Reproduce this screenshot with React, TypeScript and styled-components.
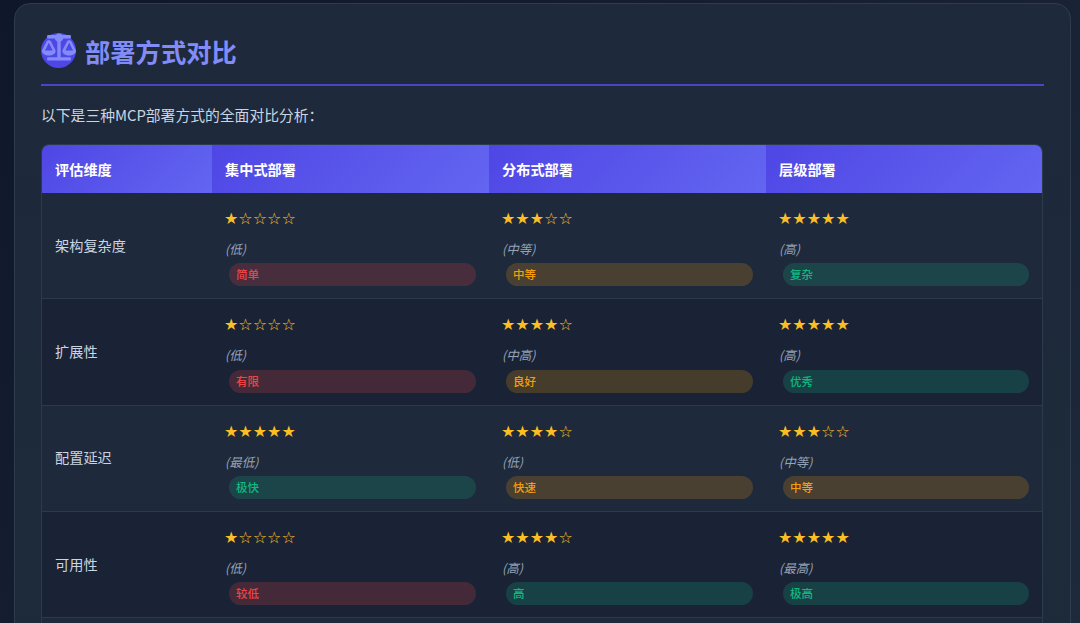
import React from "react";
import styled, { createGlobalStyle } from "styled-components";
import { FaBalanceScale } from "react-icons/fa";

const Global = createGlobalStyle`
  html, body { margin: 0; padding: 0; height: 623px; overflow: hidden; }
  body {
    background: linear-gradient(135deg, #0f172a 0%, #1e293b 100%);
    font-family: "Noto Sans CJK SC", "Liberation Sans", sans-serif;
  }
`;

const Page = styled.div`
  height: 623px;
  overflow: hidden;
  padding: 3px 9px 0 14px;
  box-sizing: border-box;
`;

const Card = styled.section`
  background: linear-gradient(180deg, #1e293b 0%, #1c2b39 100%);
  border: 1px solid #2f3c50;
  border-radius: 16px;
  padding: 29px 26px 26px;
`;

const Heading = styled.h2`
  display: flex;
  align-items: center;
  gap: 9px;
  margin: 0 0 17px;
  padding-bottom: 15px;
  border-bottom: 2px solid #4a45c8;
  color: #818cf8;
  font-size: 25.3px;
  line-height: 36px;
  font-weight: 700;
`;

const IconCircle = styled.span`
  width: 35px;
  height: 35px;
  margin-bottom: 1px;
  border-radius: 50%;
  background: #4f46e5;
  display: flex;
  align-items: flex-start;
  justify-content: center;
  color: #818cf8;
  svg { width: 34px; height: 34px; margin-top: -3px; flex: none; }
`;

const Intro = styled.p`
  margin: 0 0 17px;
  color: #cbd5e1;
  font-size: 14.8px;
  line-height: 24px;
`;

const Table = styled.table`
  width: 1002px;
  table-layout: fixed;
  border-collapse: separate;
  border-spacing: 0;
  border: 1px solid #2c3a4e;
  border-bottom: 0;
  border-radius: 8px 8px 0 0;
  overflow: hidden;
  box-sizing: border-box;
`;

const HeadCell = styled.th`
  height: 48px;
  padding: 0 13px 1px;
  box-sizing: border-box;
  text-align: left;
  color: #ffffff;
  font-size: 14.2px;
  font-weight: 700;
  background: linear-gradient(135deg, #4f46e5, #6366f1);
`;

const Row = styled.tr<{ $alt: boolean }>`
  background: ${(p) => (p.$alt ? "#1a2335" : "#1e293b")};
`;

const LabelCell = styled.td`
  padding: 0 13px 2px;
  height: 106.33px;
  box-sizing: border-box;
  color: #cbd5e1;
  font-size: 14.2px;
  border-bottom: 1px solid #2c3a4e;
`;

const DataCell = styled.td`
  padding: 14px 13px 10px;
  height: 106.33px;
  box-sizing: border-box;
  vertical-align: top;
  border-bottom: 1px solid #2c3a4e;
`;

const Stars = styled.div`
  margin-left: -1px;
  color: #fbbf24;
  font-family: "DejaVu Sans", sans-serif;
  font-size: 16px;
  line-height: 24px;
`;

const Note = styled.div`
  margin-top: 9px;
  color: #94a3b8;
  font-size: 12.5px;
  font-style: italic;
  line-height: 18px;
`;

const tones = {
  low: { bg: "rgba(239,68,68,0.2)", fg: "#ef4444" },
  mid: { bg: "rgba(245,158,11,0.2)", fg: "#f59e0b" },
  high: { bg: "rgba(16,185,129,0.2)", fg: "#10b981" },
};
type Tone = keyof typeof tones;

const Pill = styled.div<{ $tone: Tone }>`
  margin: 5.4px 0 0 4px;
  height: 23px;
  line-height: 23px;
  padding: 0 7px;
  border-radius: 12px;
  font-size: 11.5px;
  font-weight: 500;
  background: ${(p) => tones[p.$tone].bg};
  color: ${(p) => tones[p.$tone].fg};
`;

type CellData = [number, string, string, Tone];
const rows: { label: string; cells: CellData[] }[] = [
  { label: "架构复杂度", cells: [[1, "(低)", "简单", "low"], [3, "(中等)", "中等", "mid"], [5, "(高)", "复杂", "high"]] },
  { label: "扩展性", cells: [[1, "(低)", "有限", "low"], [4, "(中高)", "良好", "mid"], [5, "(高)", "优秀", "high"]] },
  { label: "配置延迟", cells: [[5, "(最低)", "极快", "high"], [4, "(低)", "快速", "mid"], [3, "(中等)", "中等", "mid"]] },
  { label: "可用性", cells: [[1, "(低)", "较低", "low"], [4, "(高)", "高", "high"], [5, "(最高)", "极高", "high"]] },
];

const heads = ["评估维度", "集中式部署", "分布式部署", "层级部署"];
const widths = [170, 277, 277, 276];

export default function App() {
  return (
    <Page>
      <Global />
      <Card>
        <Heading>
          <IconCircle>
            <FaBalanceScale />
          </IconCircle>
          部署方式对比
        </Heading>
        <Intro>以下是三种MCP部署方式的全面对比分析：</Intro>
        <Table>
          <colgroup>
            {widths.map((w, i) => (
              <col key={i} width={w} />
            ))}
          </colgroup>
          <thead>
            <tr>
              {heads.map((h) => (
                <HeadCell key={h}>{h}</HeadCell>
              ))}
            </tr>
          </thead>
          <tbody>
            {rows.map((r, i) => (
              <Row key={r.label} $alt={i % 2 === 1}>
                <LabelCell>{r.label}</LabelCell>
                {r.cells.map(([n, note, tag, tone], j) => (
                  <DataCell key={j}>
                    <Stars>{"★".repeat(n) + "☆".repeat(5 - n)}</Stars>
                    <Note>{note}</Note>
                    <Pill $tone={tone}>{tag}</Pill>
                  </DataCell>
                ))}
              </Row>
            ))}
            <Row $alt={false}>
              <LabelCell colSpan={4} />
            </Row>
          </tbody>
        </Table>
      </Card>
    </Page>
  );
}
